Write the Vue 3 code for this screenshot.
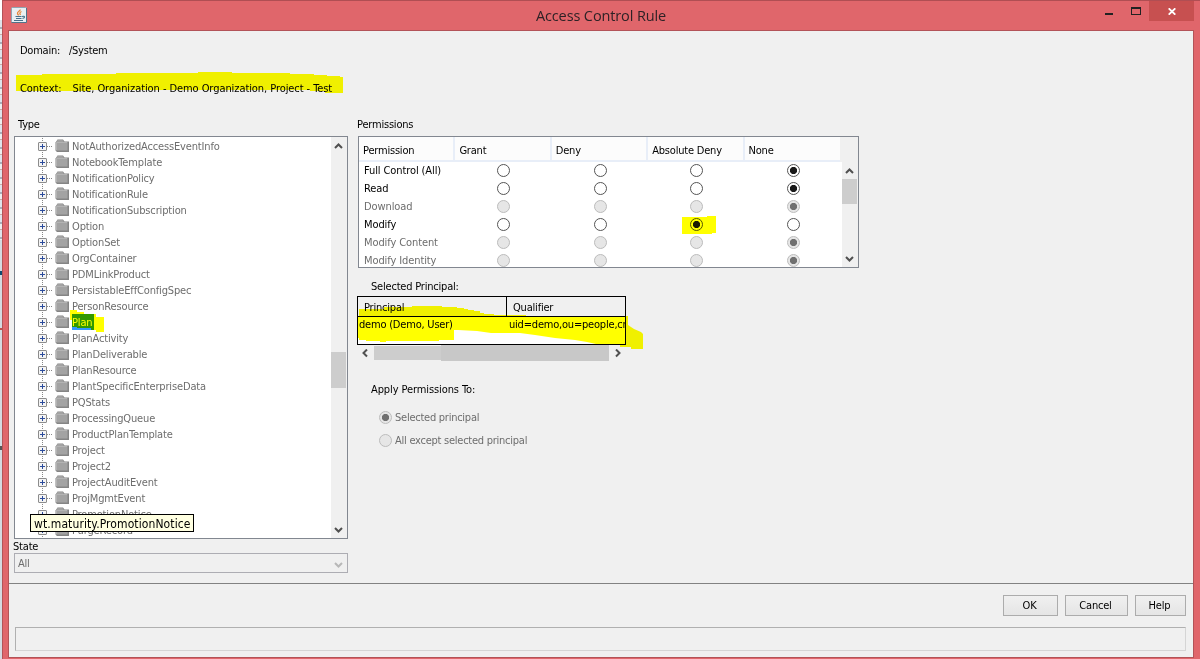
<template>
  <div class="desktop">
    <div class="behind"></div>
    <div class="window">
      <div class="titlebar">
        <svg class="java" width="16" height="16" viewBox="0 0 16 16">
          <rect x="0.5" y="0.5" width="15" height="15" rx="1" fill="#e9eff3" stroke="#8fa5b3" />
          <path d="M0.5 15.5H15.5V1" fill="none" stroke="#4f748a" />
          <path d="M9 2.500C10 4 6 4.500 6.500 6.500C6.700 7.500 7.500 7.500 7.500 8.500M10.500 4.500C8.500 5.500 8.500 6.500 9.500 8" fill="none" stroke="#e8863a" stroke-width="1.300" />
          <path d="M4.500 9.500H10.500M5 11.500H10.500M3 13.500H12M11 9.500C14.500 8.500 14 11 11.500 11.500" fill="none" stroke="#47718c" stroke-width="1.200" />
        </svg>
        <span class="title">Access Control Rule</span>
        <div class="controls">
          <svg class="min" width="8" height="2"><rect width="8" height="2" fill="#222" /></svg>
          <svg class="max" width="10" height="8"><path d="M0 0H10V8H0ZM1 2V7H9V2Z" fill="#222" fill-rule="evenodd" /></svg>
          <div class="close">
            <svg width="8" height="7" viewBox="0 0 8 7"><path d="M0.700 0.300L7.300 6.700M7.300 0.300L0.700 6.700" stroke="#fff" stroke-width="1.800" /></svg>
          </div>
        </div>
      </div>

      <div class="client">
        <div class="line domain"><span>Domain:</span><span>/System</span></div>
        <div class="line context"><span>Context:</span><span>Site, Organization - Demo Organization, Project - Test</span></div>

        <div class="columns">
          <div class="left">
            <div class="label type-label">Type</div>
            <div class="tree">
              <div class="nodes">
                <div v-for="name in types" :key="name" class="node">
                  <svg width="35" height="16" viewBox="0 0 35 16">
                    <path d="M7.500 0V16" stroke="#888" stroke-dasharray="1 1" />
                    <path d="M12 8.500H18" stroke="#888" stroke-dasharray="1 1" />
                    <rect x="3.500" y="4.500" width="8" height="8" rx="0.500" fill="#f4f4f4" stroke="#8c8c8c" />
                    <path d="M5 8.500H10M7.500 6V11" stroke="#2b4b9b" />
                    <path d="M21 4L22.500 1.500H28L29.500 3.500H34V14H22L20.500 12.500V4Z" fill="#858585" />
                    <path d="M21 4L22.500 2H27.500L29 4H32.500V12.500H21Z" fill="#a3a3a3" />
                    <path d="M21.500 12V4.500H32" fill="none" stroke="#b4b4b4" />
                  </svg>
                  <span class="name" :class="{ selected: name === 'Plan' }">{{ name }}</span>
                </div>
              </div>
              <div class="scroll tree-scroll">
                <svg width="9" height="6" viewBox="0 0 9 6"><path :d="up" class="arrow" /></svg>
                <div class="thumb"></div>
                <svg width="9" height="6" viewBox="0 0 9 6"><path :d="down" class="arrow" /></svg>
              </div>
            </div>
            <div class="label state-label">State</div>
            <div class="select">
              <span>All</span>
              <svg width="9" height="6" viewBox="0 0 9 6"><path :d="down" class="arrow pale" /></svg>
            </div>
          </div>

          <div class="right">
            <div class="label">Permissions</div>
            <div class="permissions">
              <div class="head">
                <div v-for="h in headers" :key="h" class="th">{{ h }}</div>
              </div>
              <div class="body">
                <div class="rows">
                  <div v-for="p in permissions" :key="p.name" class="row" :class="{ disabled: p.disabled }">
                    <span class="pname">{{ p.name }}</span>
                    <div v-for="i in 4" :key="i" class="cell">
                      <i class="radio" :class="{ on: p.value === i, off: p.disabled }"></i>
                    </div>
                  </div>
                </div>
                <div class="scroll perm-scroll">
                  <svg width="9" height="6" viewBox="0 0 9 6"><path :d="up" class="arrow" /></svg>
                  <div class="thumb"></div>
                  <svg width="9" height="6" viewBox="0 0 9 6"><path :d="down" class="arrow" /></svg>
                </div>
              </div>
            </div>

            <div class="label principal-label">Selected Principal:</div>
            <div class="principal">
              <div class="phead"><div>Principal</div><div>Qualifier</div></div>
              <div class="prow"><div>demo (Demo, User)</div><div>uid=demo,ou=people,cn</div></div>
            </div>
            <div class="hscroll">
              <svg width="6" height="9" viewBox="0 0 6 9"><path d="M5 0.500L1.500 4L5 7.500" class="arrow" /></svg>
              <div class="track"></div>
              <div class="bar"></div>
              <svg width="6" height="9" viewBox="0 0 6 9"><path d="M1 0.500L4.500 4L1 7.500" class="arrow" /></svg>
            </div>

            <div class="label apply-label">Apply Permissions To:</div>
            <div class="option"><i class="radio on off"></i><span>Selected principal</span></div>
            <div class="option"><i class="radio off"></i><span>All except selected principal</span></div>
          </div>
        </div>

        <div class="buttons">
          <button class="ok">OK</button>
          <button class="cancel">Cancel</button>
          <button class="help">Help</button>
        </div>
        <div class="status"></div>
      </div>
    </div>

    <div class="tooltip">wt.maturity.PromotionNotice</div>

    <!-- marker strokes over the dialog -->
    <svg class="marker" width="1200" height="659" viewBox="0 0 1200 659">
      <path d="M16 75H42V74H116V73H198V72H232V73H290V74H314V75H327V76H340V77H343V93H325V91H310V90H90V91H16Z" />
      <path d="M70 310H77V312H84V314H96V317H104V332H96V330H91V328H77V327H72V320H70Z" />
      <path d="M682 217H707V216H716V233H712V234H682Z" />
      <path d="M359 309H384V307H412V306H442V307H457V308H464V309H468V310H474V311H480V313H484V314H494V315H526V316H628V325L634 329L641 332L643 334V349H631V347H620V345H613V344H596L587 342L575 340L555 338L535 335L520 333H491L477 331L458 330H454V340H439V341H386V342H380V341H366V340H359V338H358V317H359Z" />
    </svg>
  </div>
</template>

<script setup>
const up = 'M1 5L4.500 1.500L8 5';
const down = 'M1 1L4.500 4.500L8 1';

const types = [
  'NotAuthorizedAccessEventInfo',
  'NotebookTemplate',
  'NotificationPolicy',
  'NotificationRule',
  'NotificationSubscription',
  'Option',
  'OptionSet',
  'OrgContainer',
  'PDMLinkProduct',
  'PersistableEffConfigSpec',
  'PersonResource',
  'Plan',
  'PlanActivity',
  'PlanDeliverable',
  'PlanResource',
  'PlantSpecificEnterpriseData',
  'PQStats',
  'ProcessingQueue',
  'ProductPlanTemplate',
  'Project',
  'Project2',
  'ProjectAuditEvent',
  'ProjMgmtEvent',
  'PromotionNotice',
  'PurgeRecord'
];

const headers = ['Permission', 'Grant', 'Deny', 'Absolute Deny', 'None'];

// value is the selected column, 1 = Grant ... 4 = None
const permissions = [
  { name: 'Full Control (All)', value: 4 },
  { name: 'Read', value: 4 },
  { name: 'Download', value: 4, disabled: true },
  { name: 'Modify', value: 3 },
  { name: 'Modify Content', value: 4, disabled: true },
  { name: 'Modify Identity', value: 4, disabled: true }
];
</script>

<style>
body {
  margin: 0;
  overflow: hidden;
}
</style>

<style scoped>
* {
  box-sizing: border-box;
}

.desktop {
  position: relative;
  display: flex;
  width: 1200px;
  height: 659px;
  overflow: hidden;
  font: 11px/14px 'DejaVu Sans Condensed', 'DejaVu Sans', sans-serif;
  font-stretch: condensed;
  letter-spacing: -0.2px;
  color: #000;
  white-space: nowrap;
}

.behind {
  width: 2px;
  background:
    linear-gradient(#0d4a70, #0d4a70) 0 271px / 2px 4px no-repeat,
    linear-gradient(#c0504d, #c0504d) 0 328px / 2px 2px no-repeat,
    linear-gradient(#555, #555) 0 446px / 2px 4px no-repeat,
    linear-gradient(#fff, #fff) 0 0 / 2px 20px no-repeat,
    repeating-linear-gradient(#dfe3ea 0 7px, #a9adb8 7px 9px, #eee 9px 14px, #cda9a6 14px 15px) 0 20px / 2px 220px no-repeat,
    #d5d9e0;
}

.window {
  display: flex;
  flex-direction: column;
  width: 1198px;
  padding: 0 6px 1px 5px;
  border-top: 1px solid #b04e53;
  border-left: 1px solid #b35358;
  background: #e0666b;
}

.titlebar {
  position: relative;
  display: flex;
  justify-content: center;
  height: 29px;
}

.java {
  position: absolute;
  left: 3px;
  top: 6px;
}

.title {
  padding-top: 6px;
  font: 14.5px/18px 'Open Sans', 'Noto Sans', sans-serif;
  letter-spacing: -0.12px;
  color: #2e2226;
}

.controls {
  position: absolute;
  right: 0;
  top: 0;
  display: flex;
}

.min {
  margin: 12px 18px 0 0;
}

.max {
  margin: 6px 8px 0 0;
}

.close {
  display: flex;
  justify-content: center;
  align-items: center;
  width: 45px;
  height: 20px;
  background: #c75050;
}

.client {
  height: 628px;
  border: 1px solid #b35358;
  background: #f0f0f0;
}

.line {
  display: flex;
  height: 14px;
  margin-left: 11px;
}

.domain {
  margin-top: 13px;
  gap: 9px;
  letter-spacing: -0.25px;
}

.context {
  margin-top: 24px;
  gap: 11px;
  letter-spacing: -0.07px;
}

.columns {
  display: flex;
  height: 488px;
  padding: 22px 0 0 5px;
  border-bottom: 1px solid #828282;
}

.left {
  width: 334px;
  margin-right: 9px;
}

.label {
  height: 14px;
}

.type-label {
  padding-left: 4px;
}

.tree {
  display: flex;
  height: 403px;
  margin-top: 4px;
  border: 1px solid #828790;
  background: #fff;
  overflow: hidden;
}

.nodes {
  flex: 1;
  padding: 1px 0 0 20px;
  color: #6d6d6d;
  letter-spacing: -0.15px;
}

.node {
  display: flex;
  height: 16px;
}

.name {
  height: 16px;
  margin-left: 2px;
  padding-top: 2px;
}

.selected {
  padding-right: 2px;
  background: #3399ff;
  color: #fff;
}

.scroll {
  display: flex;
  flex-direction: column;
  align-items: center;
  padding-right: 1px;
  background: #f0f0f0;
}

.arrow {
  fill: none;
  stroke: #505050;
  stroke-width: 2;
}

.pale {
  stroke: #b8b8b8;
}

.thumb {
  background: #cdcdcd;
}

.tree-scroll {
  width: 16px;
  padding-top: 6px;
}

.tree-scroll .thumb {
  width: 15px;
  height: 36px;
  margin: 203px 0 139px;
}

.state-label {
  margin-left: -1px;
  padding-top: 1px;
}

.select {
  display: flex;
  justify-content: space-between;
  align-items: center;
  height: 20px;
  padding: 1px 4px 0 3px;
  border: 1px solid #adadb3;
  color: #6d6d6d;
}

.select svg {
  margin-top: 3px;
}

.permissions {
  width: 501px;
  height: 132px;
  margin: 4px 0 0 1px;
  border: 1px solid #828790;
  background: #fff;
  overflow: hidden;
}

.head {
  display: flex;
  height: 25px;
  background: #f0f0f0;
}

.th {
  width: 96.4px;
  padding: 7px 0 0 4px;
  border-right: 2px solid #e8eef8;
  border-bottom: 2px solid #e8eef8;
  background: #fcfcfc;
}

.th:last-child {
  width: 95px;
  border-right: 0;
}

.body {
  display: flex;
  justify-content: space-between;
  height: 105px;
}

.row {
  display: flex;
  align-items: center;
  height: 18px;
}

.rows {
  width: 483px;
  margin-top: -1px;
}

.pname {
  width: 96.2px;
  padding: 2px 0 0 5px;
  letter-spacing: -0.1px;
}

.disabled {
  color: #6d6d6d;
}

.cell {
  display: flex;
  justify-content: center;
  width: 96.6px;
}

.radio {
  width: 13px;
  height: 13px;
  border: 1px solid #555;
  border-radius: 50%;
  background: #fff;
}

.radio.on {
  background: radial-gradient(circle, #1a1a1a 3.200px, #fff 4px);
}

.radio.off {
  border-color: #bcbcbc;
  background: #e6e6e6;
}

.radio.on.off {
  background: radial-gradient(circle, #707070 3.200px, #e6e6e6 4px);
}

.perm-scroll {
  width: 16px;
  padding-top: 6px;
}

.perm-scroll .thumb {
  width: 15px;
  height: 25px;
  margin: 5px 0 52px;
}

.principal-label {
  margin: 12px 0 0 14px;
}

.principal {
  width: 269px;
  height: 49px;
  margin-top: 2px;
  border: 1px solid #000;
  background: #fff;
  overflow: hidden;
}

.phead,
.prow {
  display: flex;
}

.phead {
  height: 20px;
  border-bottom: 1px solid #000;
  background: #f0f0f0;
}

.phead div {
  padding: 4px 0 0 6px;
}

.phead div:first-child {
  width: 149px;
  border-right: 1px solid #000;
}

.prow div {
  padding: 1px 0 0 1px;
}

.prow div:first-child {
  flex: none;
  width: 150px;
}

.hscroll {
  display: flex;
  height: 16px;
  padding-left: 5px;
}

.hscroll svg {
  margin-top: 4px;
}

.hscroll .track {
  width: 67px;
  height: 14px;
  margin: 1px 0 0 6px;
  background: #cdcdcd;
}

.hscroll .bar {
  width: 168px;
  margin-right: 6px;
  background: #c8c8c8;
}

.apply-label {
  margin: 22px 0 9px 14px;
  letter-spacing: -0.1px;
}

.option {
  display: flex;
  align-items: center;
  gap: 3px;
  height: 23px;
  padding-left: 22px;
  color: #6d6d6d;
  letter-spacing: -0.25px;
}

.buttons {
  display: flex;
  justify-content: flex-end;
  gap: 7px;
  margin: 11px 7px 11px 0;
}

button {
  height: 21px;
  padding: 0 2px 0 0;
  border: 1px solid #acacac;
  background: linear-gradient(#f0f0f0, #e5e5e5);
  font: inherit;
  letter-spacing: inherit;
}

.ok {
  width: 55px;
}

.cancel {
  width: 63px;
}

.help {
  width: 51px;
}

.status {
  height: 24px;
  margin: 0 7px 0 6px;
  border: 1px solid #d5d5d5;
  border-top-color: #b0b0b0;
  border-left-color: #b0b0b0;
}

.tooltip {
  position: absolute;
  left: 30px;
  top: 514px;
  width: 164px;
  height: 18px;
  padding: 2px 0 0 3px;
  border: 1px solid #000;
  background: #ffffe1;
  font-size: 12px;
  letter-spacing: 0.1px;
}

.marker {
  position: absolute;
  left: 0;
  top: 0;
  fill: #ff0;
  mix-blend-mode: multiply;
  pointer-events: none;
}
</style>
